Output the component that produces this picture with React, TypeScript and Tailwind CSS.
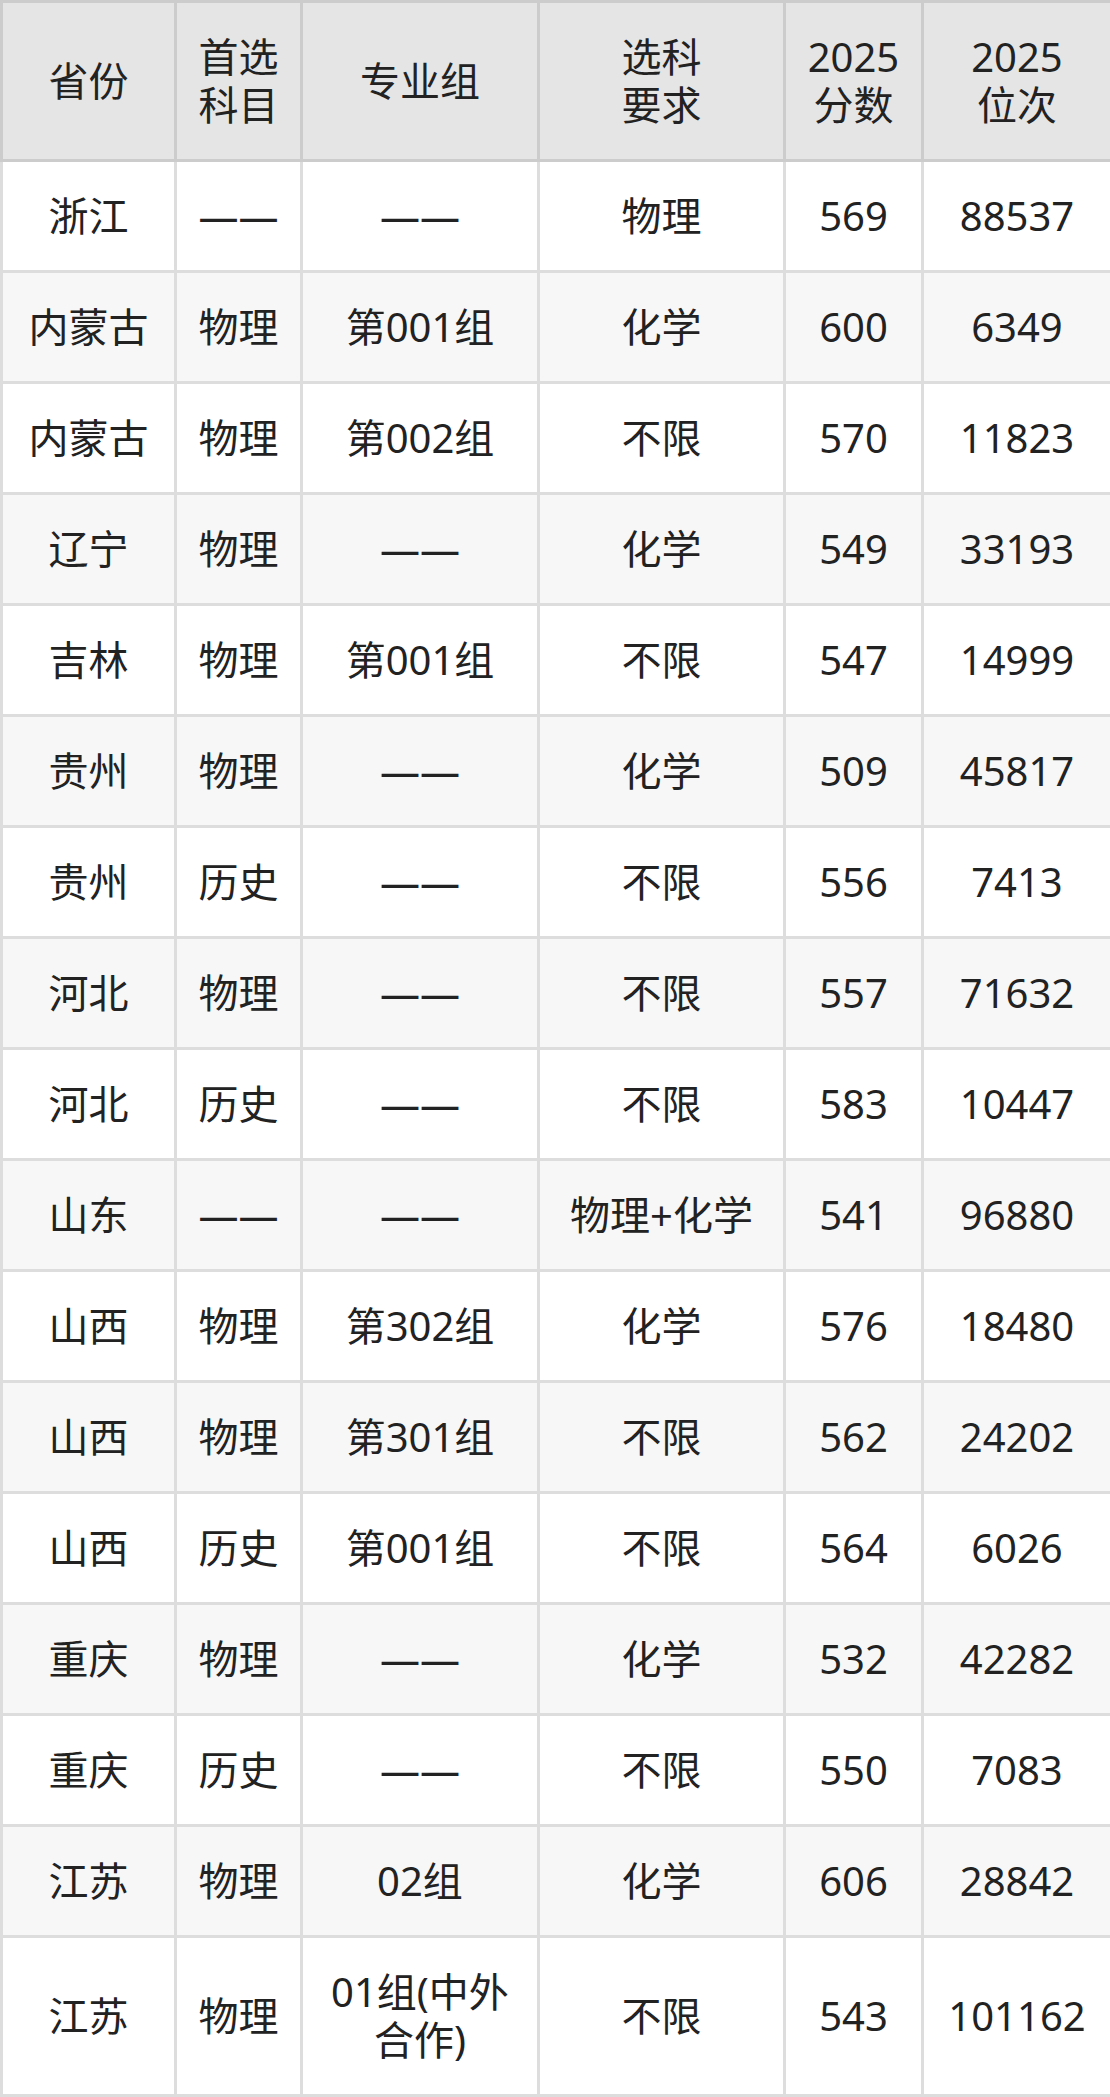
const rows: string[][] = [
  ["浙江", "——", "——", "物理", "569", "88537"],
  ["内蒙古", "物理", "第001组", "化学", "600", "6349"],
  ["内蒙古", "物理", "第002组", "不限", "570", "11823"],
  ["辽宁", "物理", "——", "化学", "549", "33193"],
  ["吉林", "物理", "第001组", "不限", "547", "14999"],
  ["贵州", "物理", "——", "化学", "509", "45817"],
  ["贵州", "历史", "——", "不限", "556", "7413"],
  ["河北", "物理", "——", "不限", "557", "71632"],
  ["河北", "历史", "——", "不限", "583", "10447"],
  ["山东", "——", "——", "物理+化学", "541", "96880"],
  ["山西", "物理", "第302组", "化学", "576", "18480"],
  ["山西", "物理", "第301组", "不限", "562", "24202"],
  ["山西", "历史", "第001组", "不限", "564", "6026"],
  ["重庆", "物理", "——", "化学", "532", "42282"],
  ["重庆", "历史", "——", "不限", "550", "7083"],
  ["江苏", "物理", "02组", "化学", "606", "28842"],
  ["江苏", "物理", "01组(中外合作)", "不限", "543", "101162"],
];

// header cells break onto two lines where the source does
const headers = ["省份", "首选\n科目", "专业组", "选科\n要求", "2025\n分数", "2025\n位次"];

const widths = [174, 126, 237, 246, 138, 189];

export default function App() {
  return (
    <div className="w-[1110px] bg-white font-['Noto_Sans','Noto_Sans_CJK_SC',sans-serif] text-[40px] text-[#222]">
      <table className="w-[1110px] table-fixed border-collapse">
        <colgroup>
          {widths.map((w, i) => (
            <col key={i} style={{ width: w }} />
          ))}
        </colgroup>
        <thead>
          <tr className="bg-[#e5e5e5]">
            {headers.map((h, i) => (
              <th
                key={i}
                className="whitespace-pre-line border-[3px] border-[#cccccc] px-4 py-[30px] text-center font-normal leading-[48px]"
              >
                {h}
              </th>
            ))}
          </tr>
        </thead>
        <tbody>
          {rows.map((r, i) => (
            <tr key={i} className={i % 2 === 1 ? "bg-[#f7f7f7]" : "bg-white"}>
              {r.map((c, j) => (
                <td
                  key={j}
                  className="border-[3px] border-[#dddddd] px-4 py-[30px] text-center leading-[48px]"
                >
                  {c}
                </td>
              ))}
            </tr>
          ))}
        </tbody>
      </table>
    </div>
  );
}
